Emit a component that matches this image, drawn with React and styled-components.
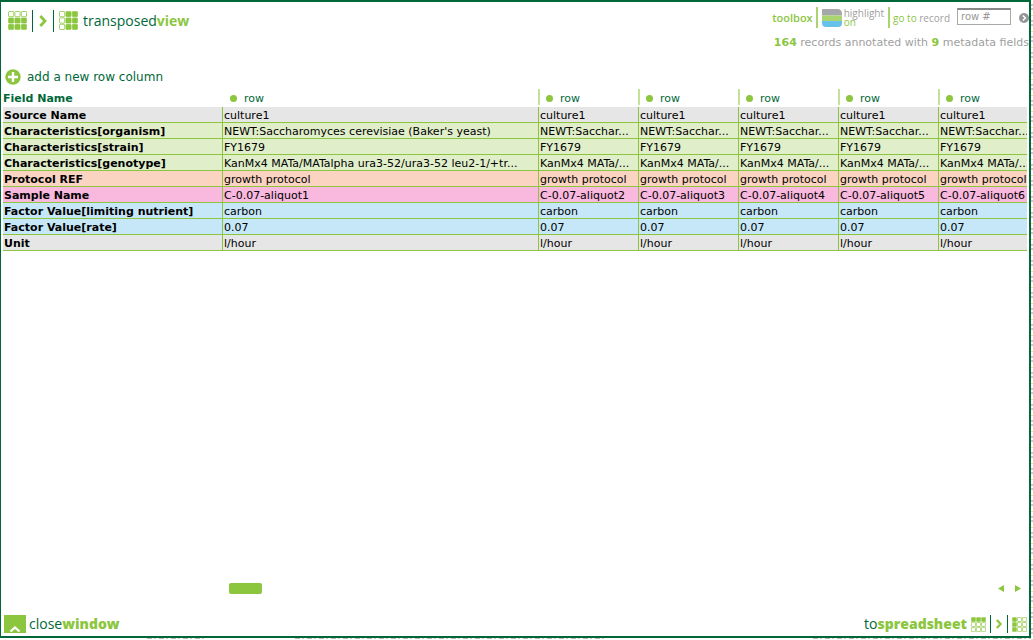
import React from "react";
import styled, { createGlobalStyle, css } from "styled-components";

const dark = "#006838";
const lime = "#8cc63f";
const grey = "#a0a0a0";
const body = `"DejaVu Sans", Verdana, sans-serif`;
const brand = `"Open Sans", "Noto Sans", sans-serif`;

const GlobalStyle = createGlobalStyle`
  * { box-sizing: border-box; }
  body { margin: 0; background: #fff; font-family: ${body}; font-size: 11px; color: #000; }
  button, input { font: inherit; color: inherit; }
`;

const Page = styled.div`
  min-height: 100vh;
  display: flex;
  flex-direction: column;
  padding-right: 2px;
  background: repeating-linear-gradient(#fff 0 4px, #c8c8c8 4px 6px, #fff 6px 8px, #c8c8c8 8px 10px, #fff 10px 15px, #d6eab8 15px 16px)
    right / 2px 100% no-repeat;
`;

const Frame = styled.div`
  flex: 1;
  display: flex;
  flex-direction: column;
  background: #fff;
  border: 2px solid ${dark};
  border-left-width: 1px;
`;

const Backdrop = styled.div`
  height: 2px;
  display: flex;
  justify-content: space-between;
  gap: 88px;
  padding-left: 147px;
`;

const Trace = styled.span`
  width: ${(p) => p.$width}px;
  height: 1px;
  margin-left: ${(p) => (p.$last ? "auto" : 0)};
  background: repeating-linear-gradient(90deg, #bbb 0 5px, #fff 5px 7px, #ccc 7px 9px, #fff 9px 12px);
`;

const Header = styled.header`
  display: flex;
  justify-content: space-between;
  align-items: flex-start;
  height: 63px;
`;

const Title = styled.h1`
  display: flex;
  align-items: center;
  gap: 5px;
  margin: 0;
  padding: 7px 0 0 7px;
  height: 30px;
`;

const Brand = styled.span`
  font: 400 14px/20px ${brand};
  color: ${dark};
  white-space: nowrap;
  b { color: ${lime}; font-weight: ${(p) => (p.$heavy ? 800 : 700)}; }
`;

const Tools = styled.div`
  display: flex;
  flex-direction: column;
  align-items: flex-end;
`;

const ToolRow = styled.form`
  display: flex;
  align-items: center;
  height: 31px;
`;

const ToolLabel = styled.label`
  font: 400 10px/20px ${brand};
  color: ${grey};
  margin: 0 7px 0 3px;
  white-space: nowrap;
  em { font-style: normal; color: ${lime}; }
`;

const ToolName = styled.span`
  font: 600 11px/20px ${brand};
  color: ${lime};
  padding-right: 3px;
`;

const Rule = styled.span`
  width: 1px;
  height: ${(p) => (p.$short ? 18 : 22)}px;
  background: ${dark};
`;

const SoftRule = styled.span`
  width: 2px;
  height: 21px;
  background: #a9d46f;
`;

const PlainButton = styled.button`
  display: flex;
  align-items: center;
  border: 0;
  padding: 0;
  background: none;
  cursor: pointer;
`;

const HighlightButton = styled(PlainButton)`
  gap: 2px;
  padding: 0 4px;
`;

const HighlightText = styled.span`
  display: flex;
  flex-direction: column;
  align-items: flex-start;
  font: 400 10px/9px ${brand};
  color: ${grey};
  em { font-style: normal; color: ${lime}; }
`;

const RowInput = styled.input`
  width: 54px;
  height: 17px;
  margin: 0 8px 3px 0;
  padding: 0 3px;
  border: 1px solid #aaa;
  border-top: 2px solid #888;
  border-radius: 0;
  font-size: 10px;
  background: #fff;
  &::placeholder { color: #999; opacity: 1; }
`;

const Summary = styled.p`
  margin: 0;
  font-size: 11px;
  line-height: 20px;
  color: ${grey};
  white-space: nowrap;
  b { color: ${lime}; }
`;

const AddButton = styled(PlainButton)`
  align-self: flex-start;
  gap: 6px;
  height: 23px;
  padding-left: 4px;
  font-size: 12px;
  color: ${dark};
`;

const Scroller = styled.div`
  flex: 1;
  overflow: hidden;
  margin: 0 2px;
`;

const Grid = styled.table`
  table-layout: fixed;
  width: 1035px;
  border-collapse: separate;
  border-spacing: 0;
`;

const Col = styled.col`
  width: ${(p) => p.$width}px;
`;

const cell = css`
  height: 16px;
  padding: 2px 1px 0;
  text-align: left;
  line-height: 13px;
  white-space: nowrap;
`;

const HeadCell = styled.th`
  ${cell}
  height: 19px;
  padding: 0 1px 1px;
  color: ${dark};
  font-weight: 400;
`;

const NameHead = styled(HeadCell)`
  padding: 2px 0 0;
  font-weight: 700;
`;

const HeadMark = styled.span`
  display: flex;
  align-items: center;
  gap: 7px;
  height: 16px;
  margin-left: -1px;
  padding: 2px 0 0 6px;
  border-left: 2px solid ${(p) => (p.$first ? "transparent" : "#c3e198")};
  &::before {
    content: "";
    width: 7px;
    height: 7px;
    border-radius: 50%;
    background: ${lime};
  }
`;

const NameCell = styled.th`
  ${cell}
  border-bottom: 1px solid ${lime};
`;

const DataCell = styled.td`
  ${cell}
  border-bottom: 1px solid ${lime};
  border-left: 1px solid ${lime};
`;

const Row = styled.tr`
  background: ${(p) => p.$tone};
`;

const ScrollBar = styled.div`
  display: flex;
  align-items: center;
  height: 12px;
  margin-bottom: 20px;
  padding: 0 8px 0 228px;
`;

const Thumb = styled.div`
  width: 33px;
  height: 11px;
  margin-right: auto;
  border-radius: 2px;
  background: ${lime};
`;

const Arrow = styled(PlainButton)`
  margin-left: 11px;
`;

const Footer = styled.footer`
  display: flex;
  justify-content: space-between;
  align-items: center;
  height: 20px;
  margin-bottom: 2px;
  padding: 0 2px 0 3px;
`;

const FooterButton = styled(PlainButton)`
  gap: ${(p) => p.$gap}px;
`;

const cells = [0, 1, 2];

// 3×3 grid with one highlighted edge: the top row or the left column.
function GridIcon({ edge, invert, size = 19 }) {
  return (
    <svg width={size} height={size} viewBox="0 0 19 19" aria-hidden="true">
      {cells.map((r) =>
        cells.map((c) => {
          const onEdge = edge === "row" ? r === 0 : c === 0;
          const filled = invert ? onEdge : !onEdge;
          return (
            <rect
              key={`${r}${c}`}
              x={c * 6.4 + 0.5}
              y={r * 6.4 + 0.5}
              width="5.2"
              height="5.2"
              rx="0.7"
              fill={filled ? lime : "#fff"}
              stroke={lime}
              strokeWidth={filled ? 0.6 : 0.8}
            />
          );
        })
      )}
    </svg>
  );
}

function Chevron({ size = 10 }) {
  return (
    <svg width={size} height="14" viewBox="0 0 10 14" aria-hidden="true">
      <path d="M2.300 2 7 7 2.300 12" fill="none" stroke={lime} strokeWidth="2.800" />
    </svg>
  );
}

const wideColumn = {
  organism: "NEWT:Saccharomyces cerevisiae (Baker's yeast)",
  genotype: "KanMx4 MATa/MATalpha ura3-52/ura3-52 leu2-1/+tr...",
};
const narrowColumn = { organism: "NEWT:Sacchar...", genotype: "KanMx4 MATa/..." };
const preview = (n) => (n === 1 ? wideColumn : narrowColumn);

const samples = [1, 2, 3, 4, 5, 6];
const rows = [
  ["Source Name", "#e6e6e6", () => "culture1"],
  ["Characteristics[organism]", "#e0eeca", (n) => preview(n).organism],
  ["Characteristics[strain]", "#e0eeca", () => "FY1679"],
  ["Characteristics[genotype]", "#e0eeca", (n) => preview(n).genotype],
  ["Protocol REF", "#fbd3c1", () => "growth protocol"],
  ["Sample Name", "#f9b8dd", (n) => `C-0.07-aliquot${n}`],
  ["Factor Value[limiting nutrient]", "#c5e7f8", () => "carbon"],
  ["Factor Value[rate]", "#c5e7f8", () => "0.07"],
  ["Unit", "#e6e6e6", () => "l/hour"],
];

export default function App() {
  return (
    <Page>
      <GlobalStyle />
      <Frame>
        <Header>
          <Title>
            <GridIcon edge="row" />
            <Rule />
            <Chevron />
            <Rule />
            <GridIcon edge="column" />
            <Brand>transposed<b>view</b></Brand>
          </Title>
          <Tools>
            <ToolRow onSubmit={(e) => e.preventDefault()}>
              <ToolName>toolbox</ToolName>
              <SoftRule />
              <HighlightButton type="button">
                <svg width="20" height="18" viewBox="0 0 20 18" aria-hidden="true">
                  <path d="M1 0h14q5 0 5 5v1.500H0V1q0-1 1-1z" fill="#a5a7aa" />
                  <path d="M0 6.500h20v5.500H0z" fill="#a9d46f" />
                  <path d="M0 12h20v2q0 4-4 4H4q-4 0-4-4z" fill="#66c2ea" />
                </svg>
                <HighlightText>highlight<em>on</em></HighlightText>
              </HighlightButton>
              <SoftRule />
              <ToolLabel htmlFor="row-number"><em>go to</em> record</ToolLabel>
              <RowInput id="row-number" placeholder="row #" />
              <PlainButton type="submit" aria-label="Go">
                <svg width="10" height="10" viewBox="0 0 10 10" aria-hidden="true">
                  <circle cx="5" cy="5" r="5" fill="#939598" />
                  <path d="M3.8 2.5 6.4 5 3.8 7.5" fill="none" stroke="#fff" strokeWidth="1.4" />
                </svg>
              </PlainButton>
            </ToolRow>
            <Summary><b>164</b> records annotated with <b>9</b> metadata fields</Summary>
          </Tools>
        </Header>

        <AddButton type="button">
          <svg width="16" height="16" viewBox="0 0 16 16" aria-hidden="true">
            <circle cx="8" cy="8" r="7.700" fill={lime} />
            <path d="M8 3v10M3 8h10" stroke="#fff" strokeWidth="2.400" />
          </svg>
          add a new row column
        </AddButton>

        <Scroller>
          <Grid>
            <colgroup>
              <Col $width={219} />
              <Col $width={316} />
              {samples.slice(1).map((n) => <Col key={n} $width={100} />)}
            </colgroup>
            <thead>
              <tr>
                <NameHead scope="col">Field Name</NameHead>
                {samples.map((n) => (
                  <HeadCell key={n} scope="col"><HeadMark $first={n === 1}>row</HeadMark></HeadCell>
                ))}
              </tr>
            </thead>
            <tbody>
              {rows.map(([name, tone, value]) => (
                <Row key={name} $tone={tone}>
                  <NameCell scope="row">{name}</NameCell>
                  {samples.map((n) => <DataCell key={n}>{value(n)}</DataCell>)}
                </Row>
              ))}
            </tbody>
          </Grid>
        </Scroller>

        <ScrollBar>
          <Thumb />
          <Arrow type="button" aria-label="Scroll left">
            <svg width="6" height="7" viewBox="0 0 6 7" aria-hidden="true"><path d="M6 0v7L0 3.5z" fill={lime} /></svg>
          </Arrow>
          <Arrow type="button" aria-label="Scroll right">
            <svg width="6" height="7" viewBox="0 0 6 7" aria-hidden="true"><path d="M0 0v7l6-3.5z" fill={lime} /></svg>
          </Arrow>
        </ScrollBar>

        <Footer>
          <FooterButton type="button" $gap={3}>
            <svg width="22" height="18" viewBox="0 0 22 18" aria-hidden="true">
              <path d="M0 0h22v18H0z" fill={lime} />
              <path d="M6.5 16.5 11 12.5l4.500 4" fill="none" stroke="#fff" strokeWidth="2.2" />
            </svg>
            <Brand $heavy>close<b>window</b></Brand>
          </FooterButton>
          <FooterButton type="button" $gap={4}>
            <Brand $heavy>to<b>spreadsheet</b></Brand>
            <GridIcon edge="row" invert size={15} />
            <Rule $short />
            <Chevron size={8} />
            <Rule $short />
            <GridIcon edge="column" invert size={15} />
          </FooterButton>
        </Footer>
      </Frame>
      <Backdrop>
        <Trace $width={60} />
        <Trace $width={310} />
        <Trace $width={218} $last />
      </Backdrop>
    </Page>
  );
}
